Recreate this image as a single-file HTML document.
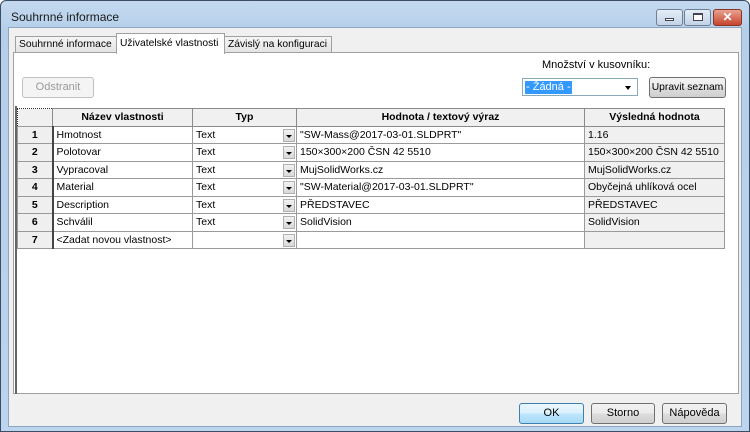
<!DOCTYPE html>
<html><head><meta charset="utf-8"><style>
*{box-sizing:border-box;margin:0;padding:0}
body{width:750px;height:432px;overflow:hidden;font-family:"Liberation Sans",sans-serif;font-size:11px;color:#000;background:#fff}
.win{position:absolute;left:0;top:0;width:750px;height:432px;background:linear-gradient(#c4d9ef,#b5cfea 30px,#bcd4ee);border:1px solid #3a4d63;border-radius:6px 6px 0 0}
.title{position:absolute;left:10px;top:9px;font-size:12px;color:#1a1a1a}
.tb{position:absolute;top:8px;height:17px;border:1px solid #6f7f93;border-radius:3px;background:linear-gradient(#e4edf8,#c3d3e8)}
.client{position:absolute;left:7px;top:26px;width:734px;height:400px;background:#f0f0f0;border:1px solid #8ea5c0}
.tab{position:absolute;height:17px;border:1px solid #a0a0a0;border-bottom:none;background:linear-gradient(#f5f5f5,#e2e2e2);font-size:10.3px;padding:2px 0 0 3px;white-space:nowrap;overflow:hidden}
.panel{position:absolute;left:4px;top:24px;width:726px;height:342px;background:#fff;border:1px solid #a0a0a0}
.btn{position:absolute;height:21px;border:1px solid #707070;border-radius:3px;background:linear-gradient(#f2f2f2,#ebebeb 50%,#dddddd 50%,#cfcfcf);text-align:center;font-size:11px;line-height:19px;white-space:nowrap}
table{border-collapse:collapse;position:absolute;left:3px;top:55px;table-layout:fixed}
td,th{height:17.5px;border:1px solid #9a9a9a;padding:0 3px;font-size:10.5px;white-space:nowrap;overflow:hidden}
th{background:#f0f0f0;font-weight:bold;text-align:center;border-color:#8a8a8a}
td.n{background:#efefef;font-weight:bold;text-align:center;border-right:2px solid #444}
td.r{background:#f0f0f0}
td.t{position:relative}
.dd{position:absolute;right:1px;top:2px;width:12px;height:13px;background:linear-gradient(#f2f2f2,#d8d8d8);border:1px solid #b0b0b0}
.dd:after{content:"";position:absolute;left:2px;top:5px;border:3px solid transparent;border-top:3px solid #000}
</style></head><body>
<div class="win">
<div class="title">Souhrnné informace</div>
<div class="tb" style="left:655px;width:27px"><div style="position:absolute;left:8px;top:8px;width:9px;height:3px;background:#fff;border:1px solid #445"></div></div>
<div class="tb" style="left:683px;width:27px"><div style="position:absolute;left:8px;top:3px;width:10px;height:8px;border:1px solid #445;border-top-width:2px;background:#fff"></div></div>
<div class="tb" style="left:712px;width:29px;background:linear-gradient(#e8a190,#c7452d);border-color:#8a3424;color:#fff;font-weight:bold;text-align:center;line-height:14px;font-size:12px">✕</div>
<div class="client">
<div class="tab" style="left:6px;top:8px;width:102px">Souhrnné informace</div>
<div class="tab" style="left:215px;top:8px;width:108px">Závislý na konfiguraci</div>
<div class="panel">
<div class="btn" style="left:8px;top:24px;width:72px;color:#9a9a9a;border-color:#c0c0c0;background:#f4f4f4">Odstranit</div>
<div style="position:absolute;left:528px;top:6px;font-size:11px">Množství v kusovníku:</div>
<div style="position:absolute;left:508px;top:25px;width:116px;height:18px;border:1px solid #8ab;background:#fff"><span style="position:absolute;left:2px;top:2px;background:#3399ff;color:#fff;padding:0 1px;line-height:13px">- Žádná -</span><span style="position:absolute;right:6px;top:7px;border:3px solid transparent;border-top:4px solid #000"></span></div>
<div class="btn" style="left:635px;top:24px;width:77px;font-size:10.3px">Upravit seznam</div>
<div style="position:absolute;left:1px;top:53px;width:722px;height:288px;border-left:2px solid #666"></div>
<table>
<colgroup><col style="width:35px"><col style="width:140px"><col style="width:104px"><col style="width:288px"><col style="width:140px"></colgroup>
<tr><th style="border:1px dotted #333"></th><th>Název vlastnosti</th><th>Typ</th><th>Hodnota / textový výraz</th><th>Výsledná hodnota</th></tr>
<tr><td class="n">1</td><td>Hmotnost</td><td class="t">Text<div class="dd"></div></td><td>"SW-Mass@2017-03-01.SLDPRT"</td><td class="r">1.16</td></tr>
<tr><td class="n">2</td><td>Polotovar</td><td class="t">Text<div class="dd"></div></td><td>150×300×200 ČSN 42 5510</td><td class="r">150×300×200 ČSN 42 5510</td></tr>
<tr><td class="n">3</td><td>Vypracoval</td><td class="t">Text<div class="dd"></div></td><td>MujSolidWorks.cz</td><td class="r">MujSolidWorks.cz</td></tr>
<tr><td class="n">4</td><td>Material</td><td class="t">Text<div class="dd"></div></td><td>"SW-Material@2017-03-01.SLDPRT"</td><td class="r">Obyčejná uhlíková ocel</td></tr>
<tr><td class="n">5</td><td>Description</td><td class="t">Text<div class="dd"></div></td><td>PŘEDSTAVEC</td><td class="r">PŘEDSTAVEC</td></tr>
<tr><td class="n">6</td><td>Schválil</td><td class="t">Text<div class="dd"></div></td><td>SolidVision</td><td class="r">SolidVision</td></tr>
<tr><td class="n">7</td><td>&lt;Zadat novou vlastnost&gt;</td><td class="t"><div class="dd"></div></td><td></td><td class="r"></td></tr>
</table>
</div>
<div class="tab" style="left:107px;top:5px;width:109px;height:21px;background:#fff;border-color:#a0a0a0;padding-top:4px">Uživatelské vlastnosti</div>
<div class="btn" style="left:510px;top:375px;width:65px;border-color:#3c7fb1;background:linear-gradient(#eaf6fd,#d9f0fc 50%,#bee6fd 50%,#a7d9f5)">OK</div>
<div class="btn" style="left:582px;top:375px;width:64px">Storno</div>
<div class="btn" style="left:653px;top:375px;width:65px">Nápověda</div>
</div>
</div>
</body></html>
